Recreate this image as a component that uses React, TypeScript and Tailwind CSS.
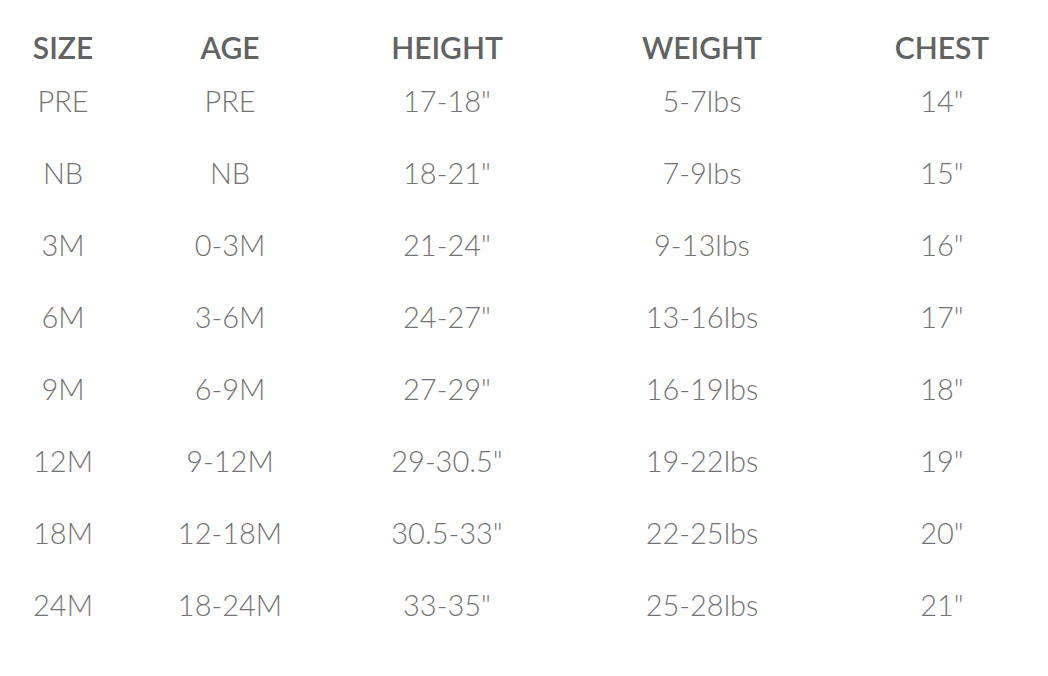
import React from "react";

const headers = ["SIZE", "AGE", "HEIGHT", "WEIGHT", "CHEST"];

const rows: string[][] = [
  ["PRE", "PRE", '17-18"', "5-7lbs", '14"'],
  ["NB", "NB", '18-21"', "7-9lbs", '15"'],
  ["3M", "0-3M", '21-24"', "9-13lbs", '16"'],
  ["6M", "3-6M", '24-27"', "13-16lbs", '17"'],
  ["9M", "6-9M", '27-29"', "16-19lbs", '18"'],
  ["12M", "9-12M", '29-30.5"', "19-22lbs", '19"'],
  ["18M", "12-18M", '30.5-33"', "22-25lbs", '20"'],
  ["24M", "18-24M", '33-35"', "25-28lbs", '21"'],
];

const cols = "grid grid-cols-[126px_208px_226px_284px_196px]";

const App = () => {
  return (
    <div className="w-[1048px] h-[676px] bg-white font-['Lato','Liberation_Sans',sans-serif]">
      <div className="pt-[29px]">
        <div className={`${cols} h-[36px] items-center`}>
          {headers.map((h) => (
            <div key={h} className="text-center text-[30px] leading-[36px] font-semibold text-[#626262]">
              {h}
            </div>
          ))}
        </div>
        {rows.map((r, i) => (
          <div key={i} className={`${cols} h-[72px] items-center`}>
            {r.map((c, j) => (
              <div key={j} className="text-center text-[29px] leading-[36px] font-light text-[#737373]">
                {c}
              </div>
            ))}
          </div>
        ))}
      </div>
    </div>
  );
};

export default App;
